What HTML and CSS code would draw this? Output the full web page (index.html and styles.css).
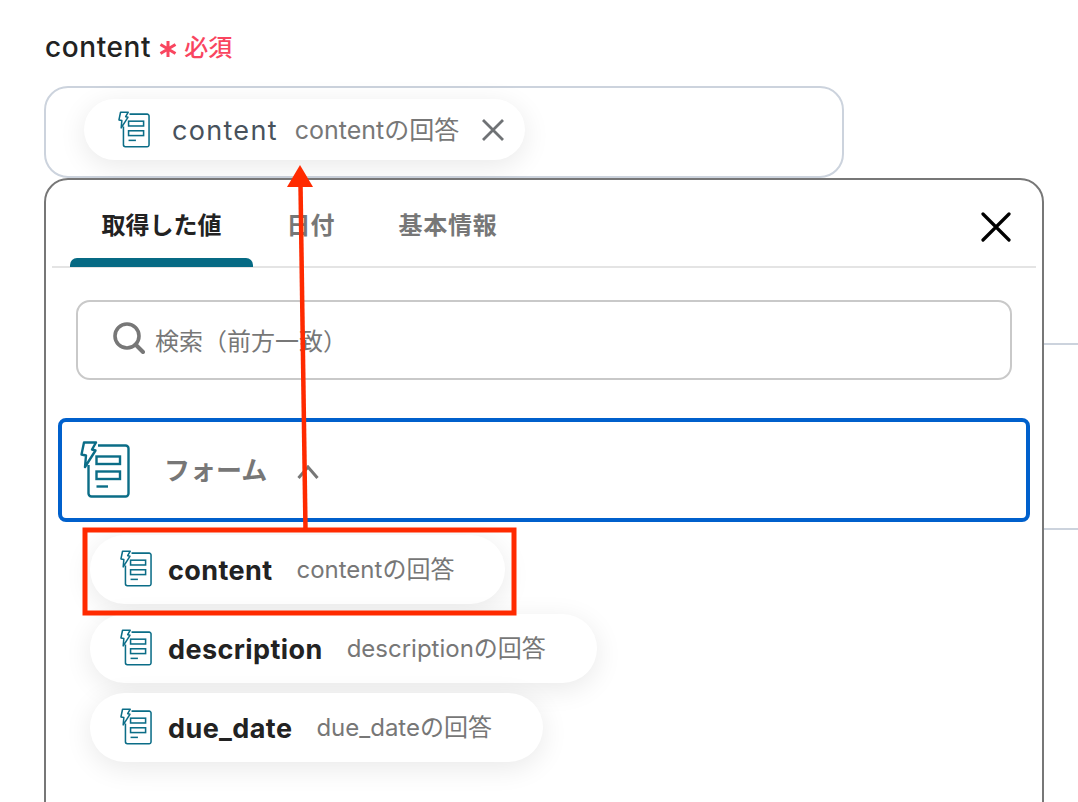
FILE: index.html
```html
<!DOCTYPE html>
<html lang="ja">
  <head>
    <meta charset="UTF-8" />
    <meta name="viewport" content="width=device-width, initial-scale=1.0" />
    <title>content</title>
    <link rel="stylesheet" href="styles.css">
  </head>
  <body>
    <svg class="icon-defs" width="0" height="0" aria-hidden="true">
      <symbol id="form-icon" viewBox="0 0 50 57">
        <path d="M18 4.5H45.5a3 3 0 0 1 3 3V52.5a3 3 0 0 1-3 3H11.5a3 3 0 0 1-3-3V24" fill="none" stroke="#0b6d87" stroke-width="2.4" />
        <rect x="16.5" y="15.5" width="23.5" height="7.5" fill="none" stroke="#0b6d87" stroke-width="2.4" />
        <rect x="16.5" y="30.5" width="23.5" height="7.5" fill="none" stroke="#0b6d87" stroke-width="2.4" />
        <path d="M16.5 45.5H28" fill="none" stroke="#0b6d87" stroke-width="2.4" />
        <path d="M4 1.5H16L12 8.5L15.5 9.5L5 26L6 14.5L1.5 13.5Z" fill="#fff" stroke="#0b6d87" stroke-width="2.4" stroke-linejoin="round" />
      </symbol>
    </svg>

    <div class="page">
      <!-- Field label -->
      <div class="field-label">
        <span class="field-name">content</span>
        <svg class="asterisk" viewBox="0 0 18 16" width="18" height="16">
          <path d="M9 0V16M1.5 3.5L16.5 12.5M16.5 3.5L1.5 12.5" fill="none" stroke="#f9455f" stroke-width="3" />
        </svg>
        <span class="required">必須</span>
      </div>

      <!-- Selected value -->
      <div class="field-box">
        <div class="chip chip-selected">
          <svg class="chip-icon"><use href="#form-icon" /></svg>
          <span class="chip-name">content</span>
          <span class="chip-value">contentの回答</span>
          <svg class="chip-close" viewBox="0 0 24 24" width="24" height="24">
            <path d="M2 2L22 22M22 2L2 22" fill="none" stroke="#6f7275" stroke-width="2.8" />
          </svg>
        </div>
      </div>

      <div class="panel-row">
        <!-- Value picker -->
        <div class="panel">
          <div class="tabs">
            <div class="tab tab-active">取得した値</div>
            <div class="tab tab-date">日付</div>
            <div class="tab tab-basic">基本情報</div>
            <svg class="panel-close" viewBox="0 0 30 30" width="30" height="30">
              <path d="M2 2L28 28M28 2L2 28" fill="none" stroke="#000" stroke-width="3.2" stroke-linecap="round" />
            </svg>
          </div>

          <div class="search">
            <svg class="search-icon" viewBox="0 0 32 32" width="32" height="32">
              <circle cx="14" cy="14" r="12" fill="none" stroke="#777" stroke-width="3.6" />
              <path d="M22.5 22.5L30 30" fill="none" stroke="#777" stroke-width="4" stroke-linecap="round" />
            </svg>
            <span class="search-text">検索（前方一致）</span>
          </div>

          <div class="section">
            <svg class="section-icon"><use href="#form-icon" /></svg>
            <span class="section-name">フォーム</span>
            <svg class="chevron" viewBox="0 0 22 14" width="22" height="14">
              <path d="M1.5 13L11 2L20.5 13" fill="none" stroke="#777" stroke-width="3" />
            </svg>
          </div>

          <div class="items">
            <div class="chip">
              <svg class="item-icon"><use href="#form-icon" /></svg>
              <span class="item-name">content</span>
              <span class="chip-value">contentの回答</span>
            </div>
            <div class="chip">
              <svg class="item-icon"><use href="#form-icon" /></svg>
              <span class="item-name">description</span>
              <span class="chip-value">descriptionの回答</span>
            </div>
            <div class="chip">
              <svg class="item-icon"><use href="#form-icon" /></svg>
              <span class="item-name">due_date</span>
              <span class="chip-value">due_dateの回答</span>
            </div>
          </div>
        </div>

        <!-- Rows of the form behind the picker -->
        <div class="side-lines">
          <div class="side-line"></div>
          <div class="side-line"></div>
        </div>
      </div>

      <!-- Annotation drawn on the screenshot -->
      <svg class="annotation" viewBox="0 0 1078 802" width="1078" height="802">
        <rect x="85" y="530" width="429" height="83" fill="none" stroke="#ff2a00" stroke-width="5" />
        <path d="M305.5 530L300.5 185" fill="none" stroke="#ff2a00" stroke-width="4.5" />
        <path d="M300 165L313 187H287Z" fill="#ff2a00" />
      </svg>
    </div>
  </body>
</html>
```

FILE: styles.css
```css
body {
  margin: 0;
  padding: 0;
  background-color: #fff;
  color: #222;
  font-family: Inter, "Noto Sans CJK JP", sans-serif;
}
.icon-defs {
  position: absolute;
}
.page {
  position: relative;
  width: 1078px;
  height: 802px;
  overflow: hidden;
  padding: 29px 0 0 44px;
  box-sizing: border-box;
}
.field-label {
  display: flex;
  align-items: center;
  height: 36px;
  padding-left: 1px;
  margin-bottom: 21px;
}
.field-name {
  font-size: 28px;
  font-weight: 500;
  letter-spacing: 0.6px;
}
.asterisk {
  margin: 4px 7px 0 8px;
}
.required {
  color: #f9455f;
  font-size: 24px;
  font-weight: 500;
  margin-bottom: 4px;
}
.field-box {
  width: 800px;
  height: 92px;
  box-sizing: border-box;
  border: 2px solid #ccd3dd;
  border-radius: 24px;
  padding: 11px 0 0 38px;
}
.chip {
  display: flex;
  align-items: center;
  width: fit-content;
  height: 69px;
  background-color: #fff;
  border-radius: 35px;
  box-shadow: 0 6px 28px rgba(0, 0, 0, 0.09);
  box-sizing: border-box;
}
.chip-selected {
  height: 61px;
  padding: 0 20px 0 34px;
}
.chip-icon {
  width: 32px;
  height: 37px;
  margin-right: 22px;
}
.chip-name {
  font-size: 27px;
  letter-spacing: 1.3px;
  color: #48525c;
  margin: 2px 17px 0 0;
}
.chip-value {
  font-size: 24px;
  color: #777;
  margin-bottom: 4px;
}
.chip-selected .chip-value {
  font-size: 25px;
}
.chip-close {
  margin-left: 22px;
}
.panel-row {
  display: flex;
  align-items: flex-start;
}
.panel {
  width: 1000px;
  height: 700px;
  flex-shrink: 0;
  box-sizing: border-box;
  border: 2px solid #777;
  border-radius: 24px;
  padding: 0 12px;
  background-color: #fff;
}
.tabs {
  display: flex;
  align-items: center;
  height: 86px;
  margin: 0 -6px;
  padding-left: 18px;
  border-bottom: 2px solid #e4e4e4;
}
.tab {
  height: 86px;
  line-height: 92px;
  text-align: center;
  font-size: 24px;
  font-weight: 700;
  color: #777;
}
.tab-active {
  position: relative;
  width: 183px;
  color: #222;
}
.tab-active::after {
  content: "";
  position: absolute;
  left: 0;
  right: 0;
  bottom: -1px;
  height: 9px;
  background-color: #066a84;
  border-radius: 7px 7px 0 0;
}
.tab-date {
  width: 81px;
  margin-left: 17px;
}
.tab-basic {
  width: 130px;
  margin-left: 32px;
  letter-spacing: 0.8px;
}
.panel-close {
  margin: 8px 25px 0 auto;
}
.search {
  display: flex;
  align-items: center;
  height: 80px;
  box-sizing: border-box;
  margin: 32px 18px 38px 18px;
  padding-left: 35px;
  border: 2px solid #c9c9c9;
  border-radius: 14px;
}
.search-icon {
  margin: 0 10px 4px 0;
}
.search-text {
  font-size: 24px;
  color: #777;
  margin-bottom: 2px;
}
.section {
  display: flex;
  align-items: center;
  height: 104px;
  box-sizing: border-box;
  border: 4px solid #0060cc;
  border-radius: 8px;
  padding-left: 18px;
}
.section-icon {
  width: 50px;
  height: 57px;
  margin: 0 34px 2px 0;
}
.section-name {
  font-size: 26px;
  font-weight: 700;
  color: #777;
  margin: 0 30px 4px 0;
}
.chevron {
  margin-top: 3px;
}
.items {
  display: flex;
  flex-direction: column;
  gap: 10px;
  padding: 13px 0 0 32px;
}
.items .chip {
  padding: 0 51px 0 30px;
}
.item-icon {
  width: 32px;
  height: 37px;
  margin: 0 16px 2px 0;
}
.item-name {
  font-size: 27px;
  font-weight: 700;
  letter-spacing: 0.4px;
  color: #222;
  margin: 2px 24px 0 0;
}
.side-lines {
  flex-grow: 1;
  padding-top: 165px;
}
.side-line {
  height: 2px;
  background-color: #ccd3dd;
  margin-bottom: 183px;
}
.annotation {
  position: absolute;
  left: 0;
  top: 0;
}
```
